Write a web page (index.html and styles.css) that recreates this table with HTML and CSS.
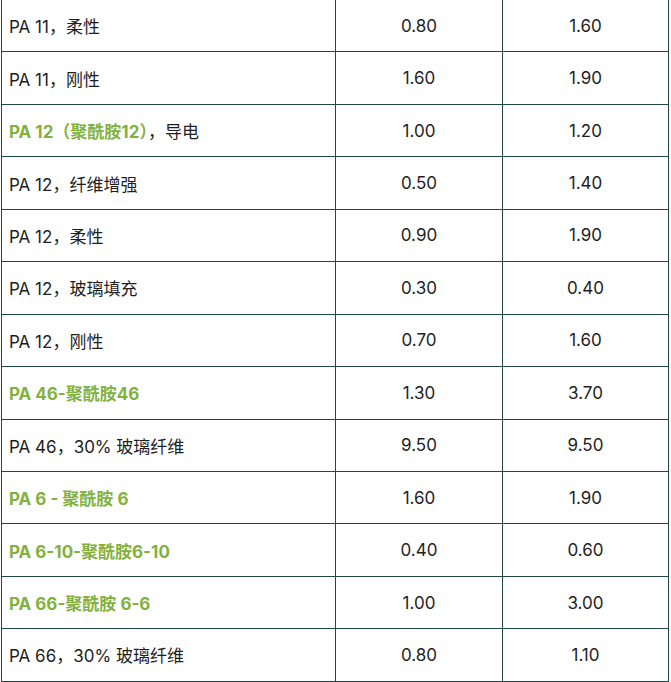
FILE: index.html
```html
<!DOCTYPE html>
<html lang="zh">
<head>
<meta charset="utf-8">
<link rel="stylesheet" href="styles.css">
</head>
<body>
<div class="wrap">
<table class="grid">
  <tr><td class="name">PA 11，柔性</td><td class="num">0.80</td><td class="num">1.60</td></tr>
  <tr><td class="name">PA 11，刚性</td><td class="num">1.60</td><td class="num">1.90</td></tr>
  <tr><td class="name"><span class="hl">PA 12（聚酰胺12）</span>，导电</td><td class="num">1.00</td><td class="num">1.20</td></tr>
  <tr><td class="name">PA 12，纤维增强</td><td class="num">0.50</td><td class="num">1.40</td></tr>
  <tr><td class="name">PA 12，柔性</td><td class="num">0.90</td><td class="num">1.90</td></tr>
  <tr><td class="name">PA 12，玻璃填充</td><td class="num">0.30</td><td class="num">0.40</td></tr>
  <tr><td class="name">PA 12，刚性</td><td class="num">0.70</td><td class="num">1.60</td></tr>
  <tr><td class="name"><span class="hl">PA 46-聚酰胺46</span></td><td class="num">1.30</td><td class="num">3.70</td></tr>
  <tr><td class="name">PA 46，30% 玻璃纤维</td><td class="num">9.50</td><td class="num">9.50</td></tr>
  <tr><td class="name"><span class="hl">PA 6 - 聚酰胺 6</span></td><td class="num">1.60</td><td class="num">1.90</td></tr>
  <tr><td class="name"><span class="hl">PA 6-10-聚酰胺6-10</span></td><td class="num">0.40</td><td class="num">0.60</td></tr>
  <tr><td class="name"><span class="hl">PA 66-聚酰胺 6-6</span></td><td class="num">1.00</td><td class="num">3.00</td></tr>
  <tr><td class="name">PA 66，30% 玻璃纤维</td><td class="num">0.80</td><td class="num">1.10</td></tr>
</table>
</div>
</body>
</html>
```
FILE: styles.css
```css
html, body {
  margin: 0;
  padding: 0;
  background: #ffffff;
}
.wrap {
  padding-left: 1px;
  margin-top: -1px;
}
.grid {
  border-collapse: collapse;
  table-layout: fixed;
  width: 668px;
  font-family: Inter, "Noto Sans CJK SC", sans-serif;
  font-size: 17px;
  color: #1e1e1e;
}
.grid td {
  border: 1.5px solid #1f4a42;
  height: 52.44px;
  padding: 0;
  box-sizing: border-box;
  vertical-align: middle;
}
.grid td.name {
  width: 334px;
  padding-left: 7px;
  text-align: left;
}
.grid td.num {
  width: 167px;
  text-align: center;
}
.grid td.num:last-child {
  width: 166px;
}
.hl {
  color: #82b13e;
  font-weight: 700;
}
```
